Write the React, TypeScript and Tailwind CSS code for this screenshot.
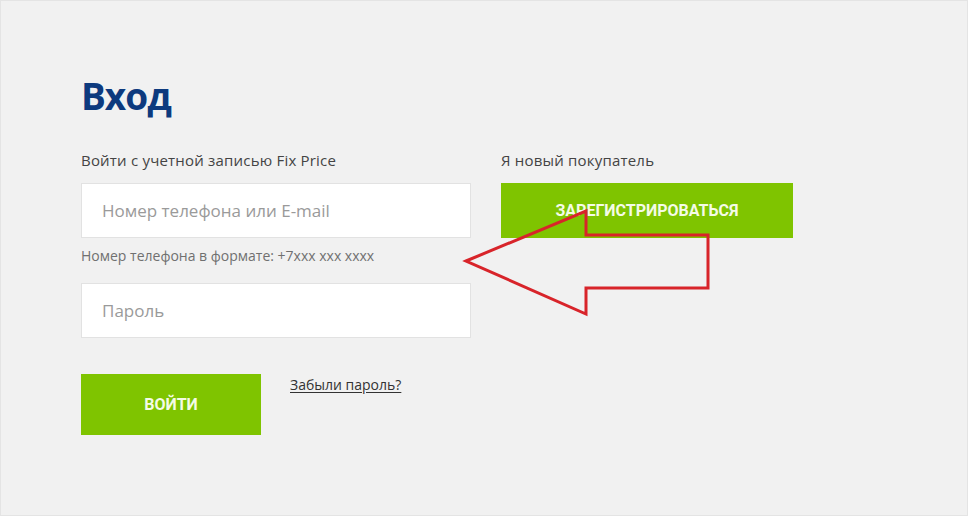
import React from "react";

export default function App() {
  return (
    <div className="min-h-[516px] w-full bg-[#f1f1f1] border border-[#e4e4e4] font-['Open_Sans',sans-serif] relative">
      <div className="pl-[80px] pt-[70px]">
        <h1 className="text-[37px] leading-[50px] font-bold text-[#0d3a7e] tracking-[-1px]">Вход</h1>
        <div className="flex gap-[30px] mt-[29px]">
          <div className="w-[390px] flex flex-col">
            <div className="text-[15px] leading-[20px] text-[#444] tracking-[0.2px]">Войти с учетной записью Fix Price</div>
            <div className="mt-[13px] h-[55px] bg-white border border-[#e2e2e2] flex items-center pl-[20px] text-[17px] text-[#9a9a9a]">
              Номер телефона или E-mail
            </div>
            <div className="mt-[8px] text-[14px] leading-[20px] text-[#707070]">Номер телефона в формате: +7xxx xxx xxxx</div>
            <div className="mt-[17px] h-[55px] bg-white border border-[#e2e2e2] flex items-center pl-[20px] text-[17px] text-[#9a9a9a]">
              Пароль
            </div>
            <div className="mt-[36px] flex items-start">
              <button className="w-[180px] h-[61px] bg-[#7fc400] text-[#f4fbe6] text-[16px] font-bold uppercase font-['Roboto',sans-serif]">
                Войти
              </button>
              <a className="ml-[29px] mt-[0px] text-[14px] text-[#333] underline underline-offset-2">Забыли пароль?</a>
            </div>
          </div>
          <div className="w-[292px] flex flex-col">
            <div className="text-[15px] leading-[20px] text-[#444] tracking-[0.2px]">Я новый покупатель</div>
            <button className="mt-[13px] h-[55px] bg-[#7fc400] text-[#f4fbe6] text-[16px] font-bold uppercase font-['Roboto',sans-serif]">
              Зарегистрироваться
            </button>
          </div>
        </div>
      </div>
      <svg className="absolute left-0 top-0 pointer-events-none" width="968" height="516">
        <polygon
          points="465,260 585,210 585,234 707,234 707,287 585,287 585,313"
          fill="none"
          stroke="#d8242a"
          strokeWidth="3"
          strokeLinejoin="miter"
        />
      </svg>
    </div>
  );
}
